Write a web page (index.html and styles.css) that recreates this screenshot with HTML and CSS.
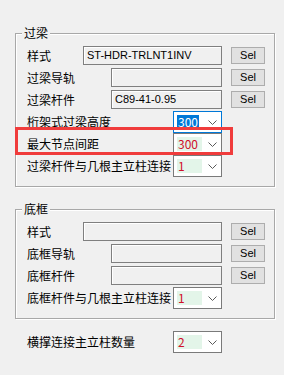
FILE: index.html
```html
<!DOCTYPE html>
<html lang="zh-CN">
<head>
  <meta charset="UTF-8" />
  <meta name="viewport" content="width=device-width, initial-scale=1.0"/>
  <title>过梁设置</title>
  <link rel="stylesheet" href="styles.css">
</head>
<body>
  <div class="group group-top">
    <span class="legend">过梁</span>

    <div class="row">
      <span class="label">样式</span>
      <div class="textbox wide">ST-HDR-TRLNT1INV</div>
      <button class="sel">Sel</button>
    </div>
    <div class="row">
      <span class="label">过梁导轨</span>
      <div class="textbox"></div>
      <button class="sel">Sel</button>
    </div>
    <div class="row">
      <span class="label">过梁杆件</span>
      <div class="textbox">C89-41-0.95</div>
      <button class="sel">Sel</button>
    </div>
    <div class="row">
      <span class="label">桁架式过梁高度</span>
      <div class="combo focused">
        <span class="value"><span class="selected">300</span></span>
        <svg class="chevron" width="9" height="5" viewBox="0 0 9 5"><polyline points="0.5,0.5 4.5,4.5 8.5,0.5" fill="none" stroke="#5a5a5a" stroke-width="1"/></svg>
      </div>
    </div>
    <div class="row">
      <span class="label">最大节点间距</span>
      <div class="combo">
        <span class="value">300</span>
        <svg class="chevron" width="9" height="5" viewBox="0 0 9 5"><polyline points="0.5,0.5 4.5,4.5 8.5,0.5" fill="none" stroke="#5a5a5a" stroke-width="1"/></svg>
      </div>
    </div>
    <div class="row">
      <span class="label">过梁杆件与几根主立柱连接</span>
      <div class="combo">
        <span class="value">1</span>
        <svg class="chevron" width="9" height="5" viewBox="0 0 9 5"><polyline points="0.5,0.5 4.5,4.5 8.5,0.5" fill="none" stroke="#5a5a5a" stroke-width="1"/></svg>
      </div>
    </div>

    <!-- highlight around 最大节点间距 -->
    <div class="marker"></div>
  </div>

  <div class="group group-bottom">
    <span class="legend">底框</span>

    <div class="row">
      <span class="label">样式</span>
      <div class="textbox wide"></div>
      <button class="sel">Sel</button>
    </div>
    <div class="row">
      <span class="label">底框导轨</span>
      <div class="textbox"></div>
      <button class="sel">Sel</button>
    </div>
    <div class="row">
      <span class="label">底框杆件</span>
      <div class="textbox"></div>
      <button class="sel">Sel</button>
    </div>
    <div class="row">
      <span class="label">底框杆件与几根主立柱连接</span>
      <div class="combo">
        <span class="value">1</span>
        <svg class="chevron" width="9" height="5" viewBox="0 0 9 5"><polyline points="0.5,0.5 4.5,4.5 8.5,0.5" fill="none" stroke="#5a5a5a" stroke-width="1"/></svg>
      </div>
    </div>
  </div>

  <div class="row loose">
    <span class="label">横撑连接主立柱数量</span>
    <div class="combo">
      <span class="value">2</span>
      <svg class="chevron" width="9" height="5" viewBox="0 0 9 5"><polyline points="0.5,0.5 4.5,4.5 8.5,0.5" fill="none" stroke="#5a5a5a" stroke-width="1"/></svg>
    </div>
  </div>
</body>
</html>
```

FILE: styles.css
```css
body {
  margin: 0;
  padding: 33px 0 0 15px;
  background: #f0f0f0;
  font-family: 'Noto Sans CJK SC', 'Noto Sans', sans-serif;
  font-size: 12px;
  color: #000;
}
.group {
  position: relative;
  box-sizing: border-box;
  width: 260px;
  padding: 11px 9px 9px 11px;
  border: 1px solid #a8a8a8;
  box-shadow: 1px 1px 0 #fff, inset 1px 1px 0 #fff;
}
.group-bottom {
  margin-top: 22px;
}
.legend {
  position: absolute;
  left: 6px;
  top: -9px;
  padding: 0 2px;
  line-height: 16px;
  background: #f0f0f0;
}
.row {
  display: flex;
  align-items: flex-start;
  height: 22px;
}
.label {
  flex: 1;
  white-space: nowrap;
  line-height: 22px;
  height: 22px;
}
.textbox {
  box-sizing: border-box;
  width: 111px;
  height: 19px;
  margin-top: 1px;
  padding-left: 3px;
  border: 1px solid #7f7f7f;
  box-shadow: inset 1px 1px 0 #fff;
  background: #f0f0f0;
  font-family: 'Liberation Sans', sans-serif;
  font-size: 11px;
  line-height: 17px;
}
.textbox.wide {
  width: 139px;
}
.sel {
  box-sizing: border-box;
  width: 34px;
  height: 17px;
  margin: 2px 0 0 9px;
  padding: 0;
  border: 1px solid #adadad;
  background: #e1e1e1;
  font-family: 'Liberation Sans', sans-serif;
  font-size: 11px;
  line-height: 15px;
  color: #000;
}
.combo {
  box-sizing: border-box;
  display: flex;
  align-items: center;
  width: 49px;
  height: 22px;
  margin-right: 43px;
  border: 1px solid #7a7a7a;
  background: #fff;
}
.combo.focused {
  border-color: #0078d7;
}
.value {
  width: 25px;
  height: 14px;
  margin-left: 3px;
  padding-left: 1px;
  box-sizing: border-box;
  background: #e3f5e9;
  color: #d0102a;
  line-height: 14px;
}
.focused .value {
  background: transparent;
  padding-left: 0;
}
.selected {
  display: inline-block;
  padding: 0 1px;
  background: #0078d7;
  color: #fff;
}
.chevron {
  margin-left: auto;
  margin-right: 4px;
  margin-top: 1px;
}
.loose {
  width: 238px;
  margin: 12px 0 0 12px;
}
.marker {
  position: absolute;
  left: -1px;
  top: 93px;
  width: 218px;
  height: 28px;
  box-sizing: border-box;
  border: 3px solid #f03c3c;
}
```
